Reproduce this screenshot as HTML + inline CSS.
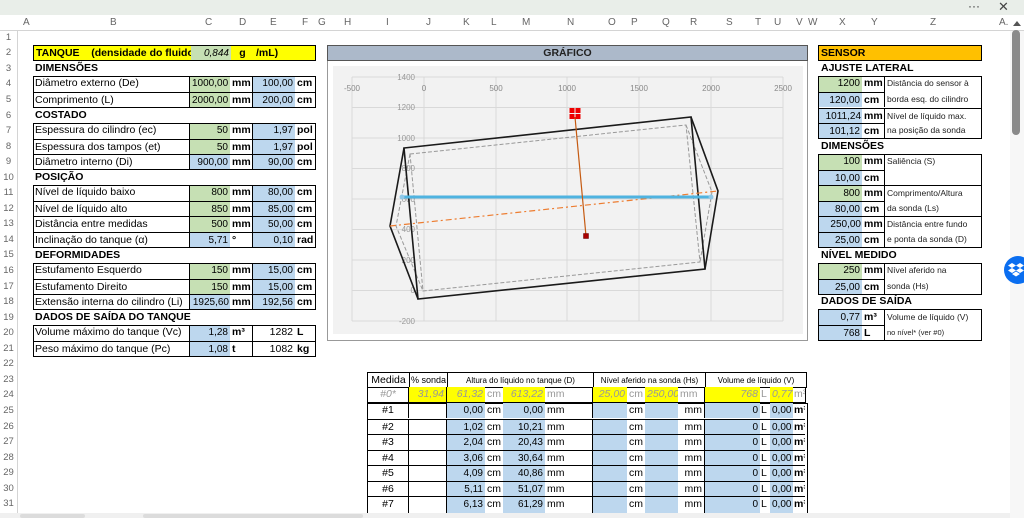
<!DOCTYPE html>
<html style="height:518px;overflow:hidden"><head><meta charset="utf-8">
<style>
*{margin:0;padding:0;box-sizing:border-box}
body{width:1024px;height:518px;overflow:hidden;background:#fff;font-family:"Liberation Sans",sans-serif;font-size:10.5px;color:#000;position:relative}
.a{position:absolute}
.r{position:absolute;height:15.55px;display:flex}
.r>span{display:block;height:100%;line-height:15px;white-space:nowrap;overflow:hidden;padding:0 2px}
.g{background:#c6e0b4;text-align:right;font-size:10px}
.b{background:#bdd7ee;text-align:right;font-size:10px}
.y{background:#ffff00}
.u{font-weight:bold}
.br{border-right:1px solid #000}
.bt{border-top:1px solid #000}
.box{position:absolute;border:1.5px solid #000}
.h{font-weight:bold;position:absolute;line-height:15px}
.cl{position:absolute;top:16px;height:14px;line-height:14px;color:#666;font-size:10px}
.rn{position:absolute;left:0;width:17px;text-align:center;color:#666;font-size:9.5px;line-height:15.55px;height:15.55px}
.d{font-size:8.5px;color:#222}
.c{text-align:center}
.gy{color:#999;font-style:italic}
</style></head><body>
<div class="a" style="left:0;top:0;width:1024px;height:15px;background:#e9eee9"></div>
<div class="a" style="left:968px;top:0;font-size:12px;color:#333;line-height:12px">···</div>
<div class="a" style="left:998px;top:0;font-size:13px;color:#444;line-height:13px">✕</div>
<div class="a" style="left:0;top:15px;width:1024px;height:16px;background:#fff;border-bottom:1px solid #d4d4d4"></div>
<div class="a" style="left:0;top:31px;width:18px;height:487px;background:#fff;border-right:1px solid #d4d4d4"></div>
<div class="cl" style="left:23px">A</div><div class="cl" style="left:110px">B</div><div class="cl" style="left:205px">C</div><div class="cl" style="left:239px">D</div><div class="cl" style="left:270px">E</div><div class="cl" style="left:302px">F</div><div class="cl" style="left:318px">G</div><div class="cl" style="left:344px">H</div><div class="cl" style="left:386px">I</div><div class="cl" style="left:426px">J</div><div class="cl" style="left:463px">K</div><div class="cl" style="left:491px">L</div><div class="cl" style="left:522px">M</div><div class="cl" style="left:567px">N</div><div class="cl" style="left:608px">O</div><div class="cl" style="left:631px">P</div><div class="cl" style="left:662px">Q</div><div class="cl" style="left:690px">R</div><div class="cl" style="left:726px">S</div><div class="cl" style="left:755px">T</div><div class="cl" style="left:774px">U</div><div class="cl" style="left:796px">V</div><div class="cl" style="left:808px">W</div><div class="cl" style="left:839px">X</div><div class="cl" style="left:871px">Y</div><div class="cl" style="left:930px">Z</div><div class="cl" style="left:999px">A.</div>
<div class="rn" style="top:29.7px">1</div><div class="rn" style="top:45.3px">2</div><div class="rn" style="top:60.8px">3</div><div class="rn" style="top:76.4px">4</div><div class="rn" style="top:91.9px">5</div><div class="rn" style="top:107.5px">6</div><div class="rn" style="top:123px">7</div><div class="rn" style="top:138.6px">8</div><div class="rn" style="top:154.1px">9</div><div class="rn" style="top:169.7px">10</div><div class="rn" style="top:185.2px">11</div><div class="rn" style="top:200.8px">12</div><div class="rn" style="top:216.3px">13</div><div class="rn" style="top:231.9px">14</div><div class="rn" style="top:247.4px">15</div><div class="rn" style="top:263px">16</div><div class="rn" style="top:278.5px">17</div><div class="rn" style="top:294.1px">18</div><div class="rn" style="top:309.6px">19</div><div class="rn" style="top:325.2px">20</div><div class="rn" style="top:340.7px">21</div><div class="rn" style="top:356.3px">22</div><div class="rn" style="top:371.8px">23</div><div class="rn" style="top:387.4px">24</div><div class="rn" style="top:402.9px">25</div><div class="rn" style="top:418.5px">26</div><div class="rn" style="top:434px">27</div><div class="rn" style="top:449.6px">28</div><div class="rn" style="top:465.1px">29</div><div class="rn" style="top:480.7px">30</div><div class="rn" style="top:496.2px">31</div>

<div class="r y" style="top:45.3px;left:33px;width:283px;border:1px solid #000"><span style="width:157px;font-weight:bold">TANQUE&nbsp;&nbsp;&nbsp; (densidade do fluido:</span><span class="g" style="width:40px;font-style:italic">0,844</span><span style="width:23px;font-weight:bold;text-align:center">g</span><span style="width:50px;font-weight:bold">/mL)</span></div>
<div class="h" style="left:35px;top:61px">DIMENSÕES</div>
<div class="r" style="top:76.4px;left:33px"><span class="br" style="width:157px">Diâmetro externo (De)</span><span class="g" style="width:40px">1000,00</span><span class="u br" style="width:23px">mm</span><span class="b" style="width:42px">100,00</span><span class="u" style="width:21px">cm</span></div>
<div class="r bt" style="top:91.9px;left:33px"><span class="br" style="width:157px">Comprimento (L)</span><span class="g" style="width:40px">2000,00</span><span class="u br" style="width:23px">mm</span><span class="b" style="width:42px">200,00</span><span class="u" style="width:21px">cm</span></div>
<div class="box" style="left:33px;top:76px;width:283px;height:32px"></div>
<div class="h" style="left:35px;top:108px">COSTADO</div>
<div class="r" style="top:123px;left:33px"><span class="br" style="width:157px">Espessura do cilindro (ec)</span><span class="g" style="width:40px">50</span><span class="u br" style="width:23px">mm</span><span class="b" style="width:42px">1,97</span><span class="u" style="width:21px">pol</span></div>
<div class="r bt" style="top:138.6px;left:33px"><span class="br" style="width:157px">Espessura dos tampos (et)</span><span class="g" style="width:40px">50</span><span class="u br" style="width:23px">mm</span><span class="b" style="width:42px">1,97</span><span class="u" style="width:21px">pol</span></div>
<div class="r bt" style="top:154.1px;left:33px"><span class="br" style="width:157px">Diâmetro interno (Di)</span><span class="b" style="width:40px">900,00</span><span class="u br" style="width:23px">mm</span><span class="b" style="width:42px">90,00</span><span class="u" style="width:21px">cm</span></div>
<div class="box" style="left:33px;top:123px;width:283px;height:47px"></div>
<div class="h" style="left:35px;top:170px">POSIÇÃO</div>
<div class="r" style="top:185.2px;left:33px"><span class="br" style="width:157px">Nível de líquido baixo</span><span class="g" style="width:40px">800</span><span class="u br" style="width:23px">mm</span><span class="b" style="width:42px">80,00</span><span class="u" style="width:21px">cm</span></div>
<div class="r bt" style="top:200.8px;left:33px"><span class="br" style="width:157px">Nível de líquido alto</span><span class="g" style="width:40px">850</span><span class="u br" style="width:23px">mm</span><span class="b" style="width:42px">85,00</span><span class="u" style="width:21px">cm</span></div>
<div class="r bt" style="top:216.3px;left:33px"><span class="br" style="width:157px">Distância entre medidas</span><span class="g" style="width:40px">500</span><span class="u br" style="width:23px">mm</span><span class="b" style="width:42px">50,00</span><span class="u" style="width:21px">cm</span></div>
<div class="r bt" style="top:231.9px;left:33px"><span class="br" style="width:157px">Inclinação do tanque (α)</span><span class="b" style="width:40px">5,71</span><span class="u br" style="width:23px">°</span><span class="b" style="width:42px">0,10</span><span class="u" style="width:21px">rad</span></div>
<div class="box" style="left:33px;top:185px;width:283px;height:63px"></div>
<div class="h" style="left:35px;top:248px">DEFORMIDADES</div>
<div class="r" style="top:263px;left:33px"><span class="br" style="width:157px">Estufamento Esquerdo</span><span class="g" style="width:40px">150</span><span class="u br" style="width:23px">mm</span><span class="b" style="width:42px">15,00</span><span class="u" style="width:21px">cm</span></div>
<div class="r bt" style="top:278.5px;left:33px"><span class="br" style="width:157px">Estufamento Direito</span><span class="g" style="width:40px">150</span><span class="u br" style="width:23px">mm</span><span class="b" style="width:42px">15,00</span><span class="u" style="width:21px">cm</span></div>
<div class="r bt" style="top:294.1px;left:33px"><span class="br" style="width:157px">Extensão interna do cilindro (Li)</span><span class="b" style="width:40px;padding:0 1px">1925,60</span><span class="u br" style="width:23px">mm</span><span class="b" style="width:42px">192,56</span><span class="u" style="width:21px">cm</span></div>
<div class="box" style="left:33px;top:263px;width:283px;height:47px"></div>
<div class="h" style="left:35px;top:310px">DADOS DE SAÍDA DO TANQUE</div>
<div class="r" style="top:325.2px;left:33px"><span class="br" style="width:157px">Volume máximo do tanque (Vc)</span><span class="b" style="width:40px">1,28</span><span class="u br" style="width:23px">m³</span><span style="width:42px;text-align:right">1282</span><span class="u" style="width:21px">L</span></div>
<div class="r bt" style="top:340.7px;left:33px"><span class="br" style="width:157px">Peso máximo do tanque (Pc)</span><span class="b" style="width:40px">1,08</span><span class="u br" style="width:23px">t</span><span style="width:42px;text-align:right">1082</span><span class="u" style="width:21px">kg</span></div>
<div class="box" style="left:33px;top:325px;width:283px;height:32px"></div>

<div class="a" style="left:327px;top:45px;width:481px;height:296px;border:1px solid #999;background:#fff"></div>
<div class="a" style="left:327px;top:45px;width:481px;height:16px;background:#acb9ca;border:1px solid #555;text-align:center;font-weight:bold;line-height:14px;color:#222">GRÁFICO</div>
<svg class="a" style="left:0;top:0" width="1024" height="518">
<rect x="333" y="66" width="470" height="268" fill="#f2f2f2"/>
<g stroke="#d9d9d9" stroke-width="1">
<line x1="352" y1="77" x2="352" y2="321"/><line x1="424" y1="77" x2="424" y2="321"/><line x1="496" y1="77" x2="496" y2="321"/><line x1="567" y1="77" x2="567" y2="321"/><line x1="639" y1="77" x2="639" y2="321"/><line x1="711" y1="77" x2="711" y2="321"/><line x1="783" y1="77" x2="783" y2="321"/>
<line x1="352" y1="77" x2="783" y2="77"/><line x1="352" y1="107.5" x2="783" y2="107.5"/><line x1="352" y1="138" x2="783" y2="138"/><line x1="352" y1="168.5" x2="783" y2="168.5"/><line x1="352" y1="199" x2="783" y2="199"/><line x1="352" y1="229.5" x2="783" y2="229.5"/><line x1="352" y1="260" x2="783" y2="260"/><line x1="352" y1="290.5" x2="783" y2="290.5"/><line x1="352" y1="321" x2="783" y2="321"/>
</g>
<g font-family="Liberation Sans" font-size="8" fill="#888" text-anchor="middle">
<text x="352" y="91">-500</text><text x="424" y="91">0</text><text x="496" y="91">500</text><text x="567" y="91">1000</text><text x="639" y="91">1500</text><text x="711" y="91">2000</text><text x="783" y="91">2500</text>
</g>
<g font-family="Liberation Sans" font-size="8" fill="#999" text-anchor="end">
<text x="415" y="80">1400</text><text x="415" y="110">1200</text><text x="415" y="141">1000</text><text x="415" y="171">800</text><text x="415" y="202">600</text><text x="415" y="232">400</text><text x="415" y="263">200</text><text x="415" y="293">0</text><text x="415" y="324">-200</text>
</g>
<g fill="none" stroke="#999" stroke-width="1" stroke-dasharray="4,2">
<polygon points="410,154 686,125 700,262 423,291"/>
<polyline points="410,154 396,226 423,291"/>
<polyline points="686,125 712,192 700,262"/>
</g>
<g fill="none" stroke="#1a1a1a" stroke-width="1.6">
<polygon points="404,148 691,117 705,269 418,299"/>
<polyline points="404,148 390,226 418,299"/>
<polyline points="691,117 718,191 705,269"/>
</g>
<line x1="390" y1="226" x2="718" y2="191" stroke="#ed7d31" stroke-width="1.2" stroke-dasharray="6,3,2,3"/>
<line x1="402" y1="197" x2="711" y2="197" stroke="#4fb3e0" stroke-width="3"/>
<circle cx="402" cy="197" r="2.5" fill="#8fc8e8"/><circle cx="711" cy="197" r="2.5" fill="#8fc8e8"/>
<line x1="575" y1="117" x2="586" y2="236" stroke="#c55a11" stroke-width="1.2"/>
<rect x="569.5" y="108" width="5" height="5" fill="#e00"/><rect x="575.5" y="108" width="5" height="5" fill="#e00"/><rect x="569.5" y="114" width="5" height="5" fill="#e00"/><rect x="575.5" y="114" width="5" height="5" fill="#e00"/>
<rect x="583.5" y="233.5" width="5" height="5" fill="#a00" stroke="#600" stroke-width="0.5"/>
</svg>

<div class="r" style="top:45.3px;left:818px;width:164px;background:#ffc000;border:1px solid #000"><span style="font-weight:bold">SENSOR</span></div>
<div class="h" style="left:821px;top:61px">AJUSTE LATERAL</div>
<div class="r" style="top:76.4px;left:818px"><span class="g" style="width:44px">1200</span><span class="u br" style="width:23px">mm</span><span class="d" style="width:97px">Distância do sensor à</span></div>
<div class="r" style="top:91.9px;left:818px"><span class="b bt" style="width:44px">120,00</span><span class="u br bt" style="width:23px">cm</span><span class="d" style="width:97px">borda esq. do cilindro</span></div>
<div class="r bt" style="top:107.5px;left:818px"><span class="b" style="width:44px;padding:0 1px">1011,24</span><span class="u br" style="width:23px">mm</span><span class="d" style="width:97px">Nível de líquido max.</span></div>
<div class="r" style="top:123px;left:818px"><span class="b bt" style="width:44px">101,12</span><span class="u br bt" style="width:23px">cm</span><span class="d" style="width:97px">na posição da sonda</span></div>
<div class="box" style="left:818px;top:76px;width:164px;height:63px"></div>
<div class="h" style="left:821px;top:139px">DIMENSÕES</div>
<div class="r" style="top:154.1px;left:818px"><span class="g" style="width:44px">100</span><span class="u br" style="width:23px">mm</span><span class="d" style="width:97px">Saliência (S)</span></div>
<div class="r" style="top:169.7px;left:818px"><span class="b bt" style="width:44px">10,00</span><span class="u br bt" style="width:23px">cm</span><span class="d" style="width:97px"></span></div>
<div class="r bt" style="top:185.2px;left:818px"><span class="g" style="width:44px">800</span><span class="u br" style="width:23px">mm</span><span class="d" style="width:97px">Comprimento/Altura</span></div>
<div class="r" style="top:200.8px;left:818px"><span class="b bt" style="width:44px">80,00</span><span class="u br bt" style="width:23px">cm</span><span class="d" style="width:97px">da sonda (Ls)</span></div>
<div class="r bt" style="top:216.3px;left:818px"><span class="b" style="width:44px;padding:0 1px">250,00</span><span class="u br" style="width:23px">mm</span><span class="d" style="width:97px">Distância entre fundo</span></div>
<div class="r" style="top:231.9px;left:818px"><span class="b bt" style="width:44px">25,00</span><span class="u br bt" style="width:23px">cm</span><span class="d" style="width:97px">e ponta da sonda (D)</span></div>
<div class="box" style="left:818px;top:154px;width:164px;height:94px"></div>
<div class="h" style="left:821px;top:248px">NÍVEL MEDIDO</div>
<div class="r" style="top:263px;left:818px"><span class="g" style="width:44px">250</span><span class="u br" style="width:23px">mm</span><span class="d" style="width:97px">Nível aferido na</span></div>
<div class="r" style="top:278.5px;left:818px"><span class="b bt" style="width:44px">25,00</span><span class="u br bt" style="width:23px">cm</span><span class="d" style="width:97px">sonda (Hs)</span></div>
<div class="box" style="left:818px;top:263px;width:164px;height:32px"></div>
<div class="h" style="left:821px;top:294px">DADOS DE SAÍDA</div>
<div class="r" style="top:309.6px;left:818px"><span class="b" style="width:44px">0,77</span><span class="u br" style="width:23px">m³</span><span class="d" style="width:97px">Volume de líquido (V)</span></div>
<div class="r" style="top:325.2px;left:818px"><span class="b bt" style="width:44px">768</span><span class="u br bt" style="width:23px">L</span><span class="d" style="width:97px;font-size:7.5px">no nível* (ver #0)</span></div>
<div class="box" style="left:818px;top:309px;width:164px;height:32px"></div>

<div class="r" style="top:371.8px;left:367px;border:1.5px solid #000;height:16px"><span class="c br" style="width:42px">Medida</span><span class="c br" style="width:38px;font-size:9px;padding:0">% sonda</span><span class="c br" style="width:146px;font-size:8px">Altura do líquido no tanque (D)</span><span class="c br" style="width:112px;font-size:8px">Nível aferido na sonda (Hs)</span><span class="c" style="width:100px;font-size:8px">Volume de líquido (V)</span></div>
<div class="r" style="top:387.4px;left:367px;border-left:1.5px solid #000;border-right:1.5px solid #000;border-bottom:1px solid #000"><span class="c br gy" style="width:41px">#0*</span><span class="y gy br" style="width:38px;text-align:right">31,94</span><span class="y gy" style="width:38px;text-align:right">61,32</span><span class="gy" style="width:18px;font-style:normal">cm</span><span class="y gy" style="width:42px;text-align:right">613,22</span><span class="gy br" style="width:48px;font-style:normal">mm</span><span class="y gy" style="width:34px;text-align:right">25,00</span><span class="gy" style="width:18px;font-style:normal">cm</span><span class="y gy" style="width:33px;text-align:right">250,00</span><span class="gy br" style="width:27px;font-style:normal">mm</span><span class="y gy" style="width:55px;text-align:right">768</span><span class="gy" style="width:10px;font-style:normal;padding:0 1px">L</span><span class="y gy" style="width:23px;text-align:right">0,77</span><span class="gy" style="width:12px;font-style:normal;padding:0 1px">m³</span></div>
<div class="a" style="left:367px;top:402.9px;width:441px;height:116px;border-left:1.5px solid #000;border-right:1.5px solid #000;border-top:1.5px solid #000"></div>
<div class="r" style="top:402.9px;left:368px"><span class="c br" style="width:41px">#1</span><span class="br" style="width:38px"></span><span class="b" style="width:38px">0,00</span><span style="width:18px">cm</span><span class="b" style="width:42px">0,00</span><span style="width:48px" class="br">mm</span><span class="b" style="width:34px"></span><span style="width:18px">cm</span><span class="b" style="width:33px"></span><span class="br" style="width:27px;text-align:right">mm</span><span class="b" style="width:55px">0</span><span style="width:10px;padding:0 1px">L</span><span class="b" style="width:23px">0,00</span><span class="u" style="width:12px;padding:0 1px">m³</span></div>
<div class="r bt" style="top:418.5px;left:368px"><span class="c br" style="width:41px">#2</span><span class="br" style="width:38px"></span><span class="b" style="width:38px">1,02</span><span style="width:18px">cm</span><span class="b" style="width:42px">10,21</span><span style="width:48px" class="br">mm</span><span class="b" style="width:34px"></span><span style="width:18px">cm</span><span class="b" style="width:33px"></span><span class="br" style="width:27px;text-align:right">mm</span><span class="b" style="width:55px">0</span><span style="width:10px;padding:0 1px">L</span><span class="b" style="width:23px">0,00</span><span class="u" style="width:12px;padding:0 1px">m³</span></div>
<div class="r bt" style="top:434px;left:368px"><span class="c br" style="width:41px">#3</span><span class="br" style="width:38px"></span><span class="b" style="width:38px">2,04</span><span style="width:18px">cm</span><span class="b" style="width:42px">20,43</span><span style="width:48px" class="br">mm</span><span class="b" style="width:34px"></span><span style="width:18px">cm</span><span class="b" style="width:33px"></span><span class="br" style="width:27px;text-align:right">mm</span><span class="b" style="width:55px">0</span><span style="width:10px;padding:0 1px">L</span><span class="b" style="width:23px">0,00</span><span class="u" style="width:12px;padding:0 1px">m³</span></div>
<div class="r bt" style="top:449.6px;left:368px"><span class="c br" style="width:41px">#4</span><span class="br" style="width:38px"></span><span class="b" style="width:38px">3,06</span><span style="width:18px">cm</span><span class="b" style="width:42px">30,64</span><span style="width:48px" class="br">mm</span><span class="b" style="width:34px"></span><span style="width:18px">cm</span><span class="b" style="width:33px"></span><span class="br" style="width:27px;text-align:right">mm</span><span class="b" style="width:55px">0</span><span style="width:10px;padding:0 1px">L</span><span class="b" style="width:23px">0,00</span><span class="u" style="width:12px;padding:0 1px">m³</span></div>
<div class="r bt" style="top:465.1px;left:368px"><span class="c br" style="width:41px">#5</span><span class="br" style="width:38px"></span><span class="b" style="width:38px">4,09</span><span style="width:18px">cm</span><span class="b" style="width:42px">40,86</span><span style="width:48px" class="br">mm</span><span class="b" style="width:34px"></span><span style="width:18px">cm</span><span class="b" style="width:33px"></span><span class="br" style="width:27px;text-align:right">mm</span><span class="b" style="width:55px">0</span><span style="width:10px;padding:0 1px">L</span><span class="b" style="width:23px">0,00</span><span class="u" style="width:12px;padding:0 1px">m³</span></div>
<div class="r bt" style="top:480.7px;left:368px"><span class="c br" style="width:41px">#6</span><span class="br" style="width:38px"></span><span class="b" style="width:38px">5,11</span><span style="width:18px">cm</span><span class="b" style="width:42px">51,07</span><span style="width:48px" class="br">mm</span><span class="b" style="width:34px"></span><span style="width:18px">cm</span><span class="b" style="width:33px"></span><span class="br" style="width:27px;text-align:right">mm</span><span class="b" style="width:55px">0</span><span style="width:10px;padding:0 1px">L</span><span class="b" style="width:23px">0,00</span><span class="u" style="width:12px;padding:0 1px">m³</span></div>
<div class="r bt" style="top:496.2px;left:368px;height:17px"><span class="c br" style="width:41px">#7</span><span class="br" style="width:38px"></span><span class="b" style="width:38px">6,13</span><span style="width:18px">cm</span><span class="b" style="width:42px">61,29</span><span style="width:48px" class="br">mm</span><span class="b" style="width:34px"></span><span style="width:18px">cm</span><span class="b" style="width:33px"></span><span class="br" style="width:27px;text-align:right">mm</span><span class="b" style="width:55px">0</span><span style="width:10px;padding:0 1px">L</span><span class="b" style="width:23px">0,00</span><span class="u" style="width:12px;padding:0 1px">m³</span></div>

<div class="a" style="left:0;top:513px;width:1010px;height:5px;background:#f0f0f0"></div>
<div class="a" style="left:20px;top:514px;width:65px;height:4px;background:#dcdcdc;border-radius:2px"></div>
<div class="a" style="left:143px;top:514px;width:220px;height:4px;background:#dcdcdc;border-radius:2px"></div>
<div class="a" style="left:1010px;top:31px;width:14px;height:487px;background:#f7f7f7"></div>
<div class="a" style="left:1013px;top:21px;width:0;height:0;border-left:4px solid transparent;border-right:4px solid transparent;border-bottom:5px solid #555"></div>
<div class="a" style="left:1012px;top:30px;width:8px;height:105px;background:#8a8a8a;border-radius:4px"></div>
<div class="a" style="left:1004px;top:256px;width:28px;height:28px;border-radius:50%;background:#0a6ef0"></div>
<svg class="a" style="left:1008px;top:262px" width="18" height="16"><g fill="#fff"><polygon points="4,1 8,3.5 4,6 0,3.5"/><polygon points="12,1 16,3.5 12,6 8,3.5"/><polygon points="4,6 8,8.5 4,11 0,8.5"/><polygon points="12,6 16,8.5 12,11 8,8.5"/><polygon points="8,9.5 12,12 8,14.5 4,12"/></g></svg>
</body></html>
